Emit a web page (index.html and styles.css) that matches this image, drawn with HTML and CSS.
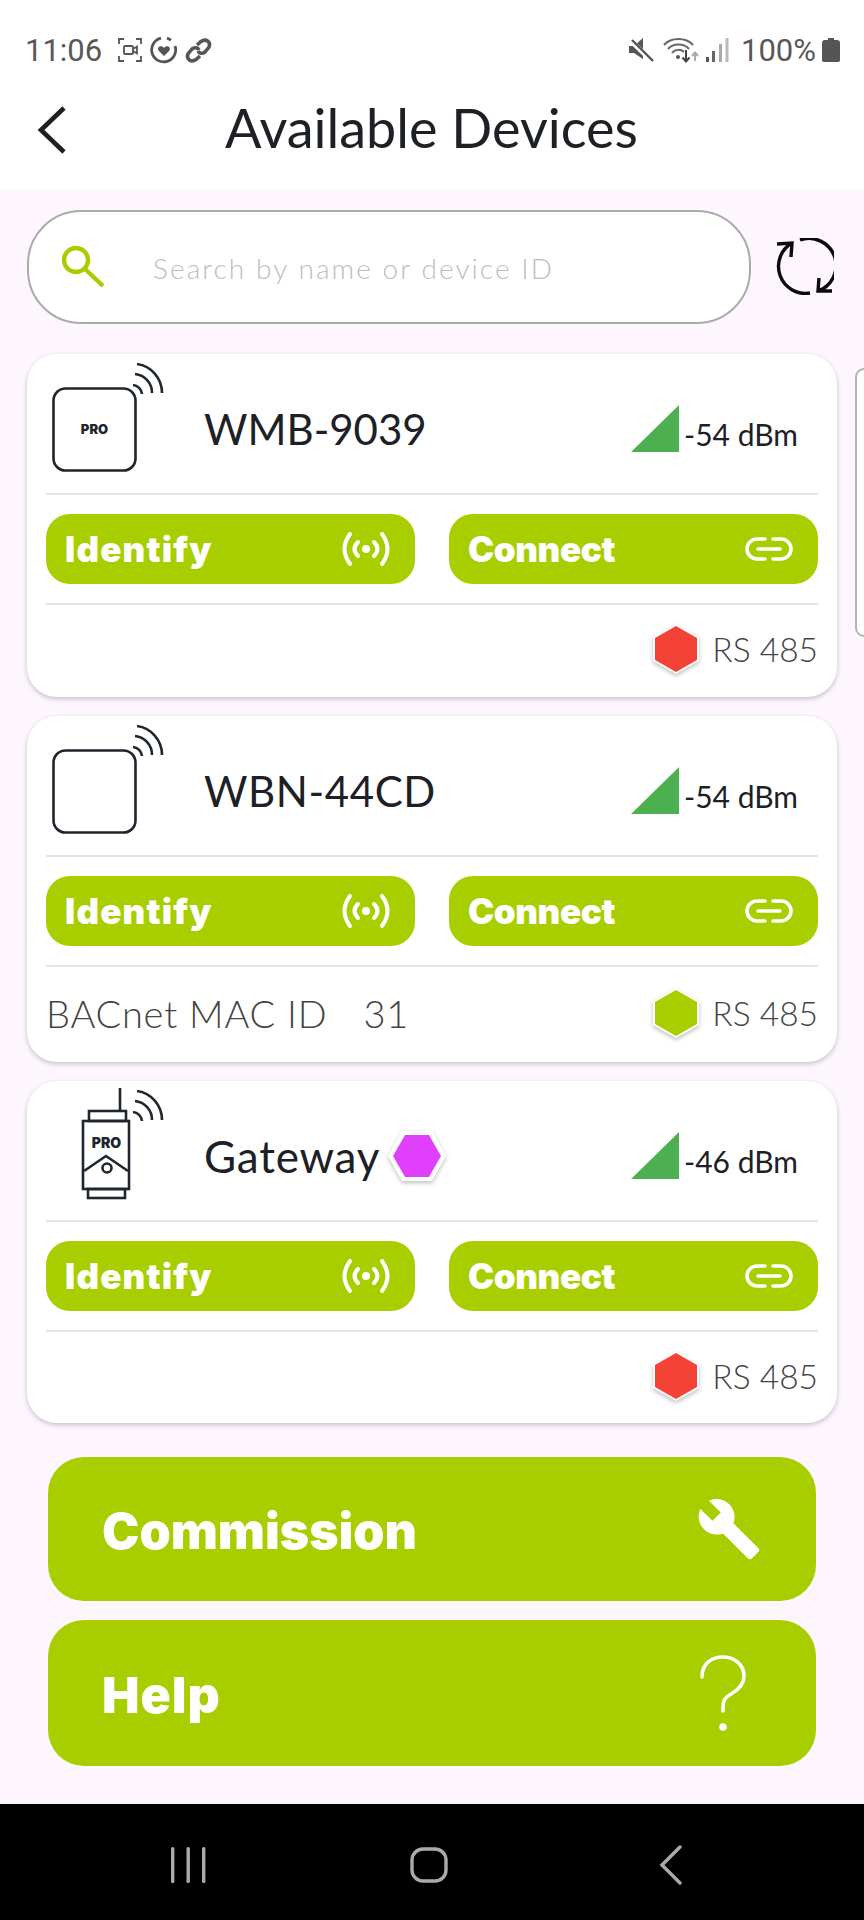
FILE: index.html
```html
<!DOCTYPE html>
<html lang="en">
<head>
<meta charset="utf-8">
<title>Available Devices</title>
<link rel="stylesheet" href="styles.css">
</head>
<body>
<svg class="defs" width="0" height="0" aria-hidden="true">
  <defs>
    <g id="waves" fill="none" stroke="#20262e" stroke-width="2.6">
      <path d="M91 10A29 29 0 0 1 116 39"/>
      <path d="M89 20A19 19 0 0 1 106 39"/>
      <path d="M87 31A10 10 0 0 1 96 40"/>
    </g>
    <g id="identify" fill="none" stroke="#fff" stroke-width="4" stroke-linecap="round">
      <circle cx="25" cy="17" r="4" fill="#fff" stroke="none"/>
      <path d="M17 10Q10 17 17 24M33 10Q40 17 33 24"/>
      <path d="M9 2Q-2 17 9 32M41 2Q52 17 41 32"/>
    </g>
    <g id="link" fill="none" stroke="#fff" stroke-width="3.6" stroke-linecap="round">
      <path d="M21 2H13A10 10 0 0 0 13 22H21M29 2H37A10 10 0 0 1 37 22H29M14 12H36"/>
    </g>
    <g id="hexagon">
      <polygon points="24,0 47,13 47,37 24,50 1,37 1,13" fill="#fff"/>
    </g>
  </defs>
</svg>
<div class="screen">
  <header class="top">
    <div class="status">
      <div class="status-side">
        <span class="clock">11:06</span>
        <svg class="st-ic" width="26" height="26" viewBox="0 0 26 26" fill="none" stroke="#555" stroke-width="1.8"><path d="M2 7V2H7M19 2H24V7M24 19V24H19M7 24H2V19"/><rect x="7" y="9" width="9" height="8" rx="1"/><path d="M16 12L20 9.5V16.5L16 14"/></svg>
        <svg class="st-ic" width="28" height="28" viewBox="0 0 28 28" fill="none" stroke="#555" stroke-width="2.8"><path d="M11 2.2A12 12 0 1 0 25 10M17 2.2A12 12 0 0 1 21 4.2"/><path d="M14 20L8.5 14.5C6.5 11 11.5 8.5 14 12C16.5 8.5 21.5 11 19.5 14.5Z" fill="#555" stroke="none"/></svg>
        <svg class="st-ic" width="27" height="27" viewBox="0 0 27 27" fill="none" stroke="#555" stroke-width="3.6"><path d="M12 8L16 4.500C21 1 26 5 24 10L20 15C17 17.500 14 16 13 14"/><path d="M15 19L11 22.500C6 26 1 22 3 17L7 12C10 9.500 13 11 14 13"/></svg>
      </div>
      <div class="status-side">
        <svg width="28" height="26" viewBox="0 0 26 26"><path d="M1 9H6L15 1V22L6 16H1Z" fill="#555"/><path d="M2 3L25 25" stroke="#fff" stroke-width="5"/><path d="M4 3L25 24" stroke="#555" stroke-width="2.400"/></svg>
        <svg class="st-wifi" width="36" height="26" viewBox="0 0 36 26" fill="none" stroke="#666" stroke-width="2"><path d="M1 8C8 0 23 0 30 8M5 12C10 6 21 6 26 12M9 16C12 12 18 12 21 15"/><circle cx="15" cy="20" r="2" fill="#555" stroke="none"/><path d="M23 13V24M19.500 20.500L23 24.500L26.500 20.500" stroke="#444"/><path d="M32 24V16M29 19L32 15.500L35 19" stroke="#aaa"/></svg>
        <svg class="st-signal" width="23" height="26" viewBox="0 0 23 26"><rect x="0" y="20" width="3" height="5" fill="#555"/><rect x="6" y="14" width="3" height="11" fill="#666"/><rect x="13" y="7" width="3" height="18" fill="#aaa"/><rect x="19.500" y="1" width="3" height="24" fill="#bbb"/></svg>
        <span class="pct">100%</span>
        <svg class="st-bat" width="18" height="26" viewBox="0 0 18 26"><path d="M6 1H12V3H15Q18 3 18 6V23Q18 25 15 25H3Q0 25 0 23V6Q0 3 3 3H6Z" fill="#555"/></svg>
      </div>
    </div>
    <div class="titlebar">
      <svg class="back" width="30" height="48" viewBox="0 0 30 48" fill="none" stroke="#1d2126" stroke-width="4.600"><path d="M27 2L4 24L27 46"/></svg>
      <h1>Available Devices</h1>
    </div>
  </header>

  <main class="content">
    <div class="search-row">
      <div class="search">
        <svg width="43" height="42" viewBox="0 0 43 42" fill="none" stroke="#a8ce00" stroke-width="4.400"><circle cx="14" cy="14" r="12"/><path d="M23 23L41 40"/></svg>
        <span class="placeholder">Search by name or device ID</span>
      </div>
      <svg class="refresh" width="58" height="58" viewBox="0 0 58 58" fill="none" stroke="#0b0b0b" stroke-width="3.400"><path d="M24 2A27 27 0 0 1 42 53M43 40L42 53L56 53"/><path d="M34 55A27 27 0 0 1 16 5M1 6L16 5L15 19"/></svg>
    </div>

    <section class="card">
      <div class="peek"></div>
      <div class="card-top">
        <svg class="dev" width="120" height="141" viewBox="0 0 120 141">
          <rect x="7.500" y="34.500" width="82" height="82" rx="12" fill="none" stroke="#20262e" stroke-width="2.600"/>
          <text class="pro-s" x="48.500" y="80" text-anchor="middle">PRO</text>
          <use href="#waves"/>
        </svg>
        <span class="name">WMB-9039</span>
        <div class="rssi">
          <span class="tri"></span><span class="dbm">-54 dBm</span>
        </div>
      </div>
      <div class="actions">
        <button class="act act-id"><span>Identify</span><svg width="50" height="34" viewBox="0 0 50 34"><use href="#identify"/></svg></button>
        <button class="act"><span>Connect</span><svg width="50" height="24" viewBox="0 0 50 24"><use href="#link"/></svg></button>
      </div>
      <div class="card-foot">
        <span class="mac"></span>
        <div class="proto"><svg class="hex" width="48" height="50" viewBox="0 0 48 50"><use href="#hexagon"/><polygon class="hex-red" points="24,2 45,14 45,36 24,48 3,36 3,14"/></svg><span>RS 485</span></div>
      </div>
    </section>

    <section class="card">
      <div class="card-top">
        <svg class="dev" width="120" height="141" viewBox="0 0 120 141">
          <rect x="7.500" y="34.500" width="82" height="82" rx="12" fill="none" stroke="#20262e" stroke-width="2.600"/>
          <use href="#waves"/>
        </svg>
        <span class="name name-wb">WBN-44CD</span>
        <div class="rssi">
          <span class="tri"></span><span class="dbm">-54 dBm</span>
        </div>
      </div>
      <div class="actions">
        <button class="act act-id"><span>Identify</span><svg width="50" height="34" viewBox="0 0 50 34"><use href="#identify"/></svg></button>
        <button class="act"><span>Connect</span><svg width="50" height="24" viewBox="0 0 50 24"><use href="#link"/></svg></button>
      </div>
      <div class="card-foot card-foot-mac">
        <span class="mac"><span>BACnet MAC ID</span><span>31</span></span>
        <div class="proto"><svg class="hex" width="48" height="50" viewBox="0 0 48 50"><use href="#hexagon"/><polygon class="hex-green" points="24,2 45,14 45,36 24,48 3,36 3,14"/></svg><span>RS 485</span></div>
      </div>
    </section>

    <section class="card">
      <div class="card-top">
        <svg class="dev" width="120" height="141" viewBox="0 0 120 141" fill="none" stroke="#20262e" stroke-width="2.600">
          <path d="M74 7V30"/>
          <rect x="43" y="30" width="37" height="10"/>
          <rect x="37" y="40" width="46" height="68"/>
          <rect x="42" y="108" width="37" height="9"/>
          <path d="M38 90L60 75L82 90"/>
          <circle cx="61" cy="87" r="4.500"/>
          <text class="pro-g" x="60.500" y="67" text-anchor="middle">PRO</text>
          <use href="#waves"/>
        </svg>
        <span class="name name-gw">Gateway</span>
        <svg class="hex hex-title" width="60" height="54" viewBox="0 0 60 54"><polygon points="15,2 45,2 59,27 45,52 15,52 1,27" fill="#fff"/><polygon class="hex-purple" points="18,6 42,6 54,27 42,48 18,48 6,27"/></svg>
        <div class="rssi">
          <span class="tri"></span><span class="dbm">-46 dBm</span>
        </div>
      </div>
      <div class="actions">
        <button class="act act-id"><span>Identify</span><svg width="50" height="34" viewBox="0 0 50 34"><use href="#identify"/></svg></button>
        <button class="act"><span>Connect</span><svg width="50" height="24" viewBox="0 0 50 24"><use href="#link"/></svg></button>
      </div>
      <div class="card-foot card-foot-last">
        <span class="mac"></span>
        <div class="proto"><svg class="hex" width="48" height="50" viewBox="0 0 48 50"><use href="#hexagon"/><polygon class="hex-red" points="24,2 45,14 45,36 24,48 3,36 3,14"/></svg><span>RS 485</span></div>
      </div>
    </section>

    <div class="big-actions">
      <button class="big"><span>Commission</span>
        <svg width="66" height="66" viewBox="0 0 24 24"><path fill="#fff" d="M22.700 19l-9.100-9.100c.9-2.300.4-5-1.500-6.900-2-2-5-2.400-7.400-1.300L9 6 6 9 1.600 4.700C.4 7.100.9 10.100 2.900 12.100c1.900 1.900 4.600 2.400 6.900 1.500l9.100 9.100c.4.400 1 .4 1.400 0l2.300-2.300c.5-.4.500-1.100.1-1.400z"/></svg>
      </button>
      <button class="big big-help"><span>Help</span>
        <svg class="help-ic" width="48" height="78" viewBox="0 0 48 78" fill="none" stroke="#fff" stroke-width="3.600" stroke-linecap="round"><path d="M3 23C3 10 12 3 24 3C36 3 45 11 45 22C45 31 39 36 32 40C26 43.500 24 46 24 53V57"/><circle cx="24" cy="73" r="3.800" fill="#fff" stroke="none"/></svg>
      </button>
    </div>
  </main>

  <nav class="navbar">
    <svg width="36" height="38" viewBox="0 0 36 38" fill="#aaa"><rect x="1" y="1" width="3.400" height="36" rx="1.500"/><rect x="16.500" y="1" width="3.400" height="36" rx="1.500"/><rect x="32" y="1" width="3.400" height="36" rx="1.500"/></svg>
    <svg class="nav-home" width="38" height="36" viewBox="0 0 38 36" fill="none" stroke="#aaa" stroke-width="3.400"><rect x="2" y="2" width="34" height="32" rx="11"/></svg>
    <svg width="24" height="40" viewBox="0 0 24 40" fill="none" stroke="#aaa" stroke-width="3.400" stroke-linecap="round"><path d="M21 2L3 20L21 38"/></svg>
  </nav>
</div>
</body>
</html>
```

FILE: styles.css
```css
* { box-sizing: border-box; }
html, body { margin: 0; padding: 0; }
body { width: 864px; height: 1920px; overflow: hidden; font-family: "Lato", "Liberation Sans", sans-serif; color: #1d2126; background: #fdf6fe; }
.defs { position: absolute; }
.screen { width: 864px; height: 1920px; display: flex; flex-direction: column; }

.top { height: 190px; background: #fff; flex: none; }
.status { height: 86px; padding: 14px 24px 0 25px; display: flex; justify-content: space-between; align-items: center; }
.status-side { display: flex; align-items: center; }
.clock, .pct { font-family: "Roboto", sans-serif; font-size: 31px; color: #585858; }
.clock { margin-right: 15px; }
.st-ic { margin-right: 7px; }
.st-wifi { margin-left: 8px; }
.st-signal { margin-left: 7px; }
.pct { margin-left: 12px; }
.st-bat { margin-left: 6px; }

.titlebar { height: 104px; padding: 0 0 16px 37px; display: flex; align-items: center; }
.back { flex: none; }
.titlebar h1 { margin: 0 0 4px 158px; font-size: 54px; font-weight: 400; line-height: 1; white-space: nowrap; }

.content { flex: 1; padding: 20px 26px 0 27px; display: flex; flex-direction: column; }
.search-row { display: flex; align-items: center; height: 114px; margin-bottom: 30px; }
.search { width: 724px; height: 114px; background: #fff; border: 2px solid #ababab; border-radius: 54px; padding: 0 0 0 33px; display: flex; align-items: center; }
.placeholder { margin: 2px 0 0 48px; font-size: 28px; letter-spacing: 2.100px; color: #bdbdbd; font-weight: 300; }
.refresh { margin-left: 25px; }

.card { position: relative; width: 810px; background: #fff; border-radius: 30px; padding: 0 19px; margin-bottom: 19px; box-shadow: 0 2px 5px rgba(0,0,0,.22); }
.peek { position: absolute; left: 828px; top: 14px; width: 20px; height: 269px; border: 2px solid #b5b5b5; border-radius: 9px 0 0 9px; background: #fff; }
.card-top { height: 141px; padding-top: 10px; display: flex; align-items: center; border-bottom: 2px solid #e3e3e3; }
.dev { flex: none; align-self: flex-start; margin-top: -10px; }
.name { margin-left: 38px; font-size: 42px; line-height: 1; }
.name-wb { letter-spacing: .6px; }
.name-gw { font-size: 44px; letter-spacing: .8px; }
.hex-title { margin-left: 7px; }
.pro-s { font: 900 13px "Inter", sans-serif; fill: #20262e; stroke: none; }
.pro-g { font: 900 14px "Inter", sans-serif; fill: #20262e; stroke: none; }
.rssi { margin-left: auto; margin-right: 20px; display: flex; align-items: flex-end; }
.tri { width: 48px; height: 47px; background: #4caf50; clip-path: polygon(100% 0, 100% 100%, 0 100%); }
.dbm { margin-left: 5px; font-size: 30px; line-height: 36px; }

.actions { display: flex; justify-content: space-between; padding: 19px 0; border-bottom: 2px solid #e3e3e3; }
.act { width: 369px; height: 70px; background: #a8ce00; border: 0; border-radius: 24px; padding: 0 24px 0 19px; display: flex; justify-content: space-between; align-items: center; color: #fff; font-family: "Inter", sans-serif; font-weight: 900; font-size: 35px; letter-spacing: -.4px; }
.act-id { letter-spacing: 1.200px; }
.big { width: 768px; background: #a8ce00; border: 0; border-radius: 36px; padding: 0 54px; display: flex; justify-content: space-between; align-items: center; color: #fff; font-family: "Inter", sans-serif; font-weight: 900; font-size: 50px; }
.big span { margin-top: 4px; }
.big:first-child { height: 144px; }
.big:last-child { height: 146px; }
.big-help span { letter-spacing: 1px; }
.help-ic { margin-right: 15px; }

.card-foot { height: 92px; display: flex; justify-content: space-between; align-items: center; padding-bottom: 4px; }
.card-foot-mac { height: 95px; }
.card-foot-last { height: 91px; }
.mac { display: flex; gap: 36px; font-size: 38px; letter-spacing: .8px; font-weight: 300; color: #444; }
.proto { display: flex; align-items: center; font-size: 33.500px; font-weight: 300; color: #444; }
.proto span { margin-left: 12px; }
.hex { flex: none; filter: drop-shadow(0 2px 2px rgba(0,0,0,.25)); }
.hex-red { fill: #f44336; }
.hex-green { fill: #a8ce00; }
.hex-purple { fill: #e040fb; }

.big-actions { margin-top: 15px; margin-left: 21px; display: flex; flex-direction: column; gap: 19px; }

.navbar { height: 116px; background: #000; flex: none; padding: 6px 181px 0 170px; display: flex; justify-content: space-between; align-items: center; }
.nav-home { margin-right: 7px; }
```
